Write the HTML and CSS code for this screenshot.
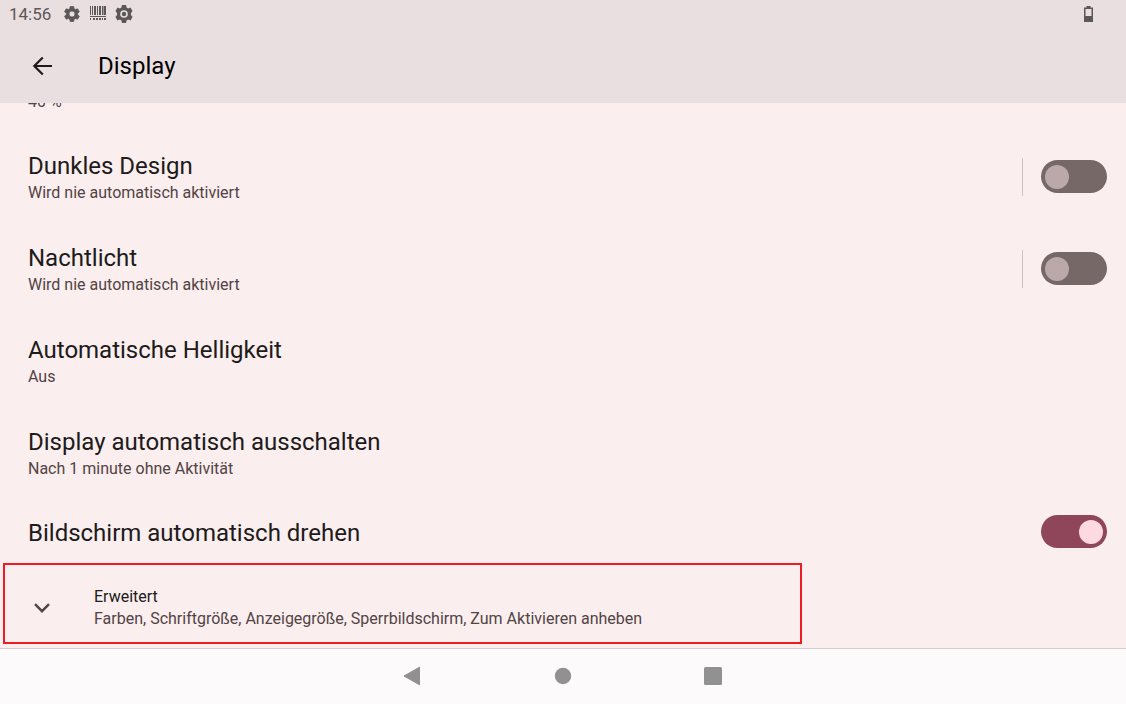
FILE: index.html
```html
<!DOCTYPE html>
<html lang="de">
<head>
<meta charset="utf-8">
<meta name="viewport" content="width=device-width, initial-scale=1">
<title>Display</title>
<link rel="stylesheet" href="styles.css">
</head>
<body>
<header class="top">
  <div class="status">
    <time class="clock">14:56</time>
    <svg class="gear-small" viewBox="0 0 24 24" width="18" height="18" aria-hidden="true"><path fill="currentColor" stroke="currentColor" fill-rule="evenodd" d="M19.4 13a7.500 7.500 0 0 0 0-2l2.100-1.600a.5.5 0 0 0 .1-.7l-2-3.400a.5.5 0 0 0-.6-.2l-2.500 1a7.300 7.300 0 0 0-1.700-1l-.4-2.600a.5.5 0 0 0-.5-.5h-4a.5.5 0 0 0-.5.5L9 5.100a7.700 7.700 0 0 0-1.700 1l-2.500-1a.5.5 0 0 0-.6.2l-2 3.400a.5.5 0 0 0 .1.700L4.500 11a8 8 0 0 0 0 2l-2.200 1.600a.5.5 0 0 0-.1.700l2 3.400c.1.200.4.300.6.200l2.500-1a7.300 7.300 0 0 0 1.700 1l.4 2.600c0 .3.200.5.500.5h4c.3 0 .5-.2.5-.5l.4-2.600a7.700 7.700 0 0 0 1.700-1l2.500 1c.2.100.5 0 .6-.2l2-3.400a.5.5 0 0 0-.1-.7zM12 16a4 4 0 1 1 0-8 4 4 0 0 1 0 8z"/></svg>
    <svg class="barcode" viewBox="0 0 16 15" width="16" height="15" aria-hidden="true"><path fill="currentColor" d="M0 0h1v9H0zM2 0h1v9H2zM4 0h2v9H4zM7 0h1v9H7zM9 0h2v9H9zM12 0h1v9h-1zM13.500 0H16v9h-2.500zM0 10h16v1H0zM0 12h1v2H0zM3 12h2v2H3zM6 12h2v2H6zM9 12h2v2H9zM12 12h1v2h-1zM14 12h2v2h-2z"/></svg>
    <svg class="gear-large" viewBox="0 0 18 18" width="18" height="18" aria-hidden="true"><path fill="currentColor" fill-rule="evenodd" d="M7 0h4l.6 2.500 1.500.9L15.500 2.600l2 3.500L16 8v2l1.500 1.900-2 3.500-2.400-.8-1.500.9L11 18H7l-.6-2.500-1.500-.9-2.400.8-2-3.500L2 10V8L.5 6.100l2-3.500 2.400.8 1.500-.9zM9 5.200a3.800 3.800 0 1 0 0 7.600 3.800 3.800 0 0 0 0-7.600z"/><circle cx="9" cy="9" r="2.200" fill="currentColor"/></svg>
    <svg class="battery" viewBox="0 0 9 16" width="9" height="16" aria-hidden="true"><path fill="currentColor" fill-rule="evenodd" d="M2.500 0h4v1.500H9V16H0V1.500h2.500zM1.500 3v7h6V3z"/></svg>
  </div>
  <div class="appbar">
    <button class="back" type="button" aria-label="Zurück"><svg viewBox="0 0 20 20" width="20" height="20" aria-hidden="true"><path fill="none" stroke="currentColor" stroke-width="2.200" d="M20 10H2.500M10.800 1.500L2.300 10l8.500 8.500"/></svg></button>
    <h1 class="title">Display</h1>
  </div>
</header>
<main class="settings">
  <div class="peek">40 %</div>
  <section class="row">
    <div class="copy"><h2 class="name" id="dark">Dunkles Design</h2><p class="summary">Wird nie automatisch aktiviert</p></div>
    <div class="control divided"><input class="switch" type="checkbox" role="switch" aria-labelledby="dark"></div>
  </section>
  <section class="row">
    <div class="copy"><h2 class="name" id="night">Nachtlicht</h2><p class="summary">Wird nie automatisch aktiviert</p></div>
    <div class="control divided"><input class="switch" type="checkbox" role="switch" aria-labelledby="night"></div>
  </section>
  <section class="row">
    <div class="copy"><h2 class="name">Automatische Helligkeit</h2><p class="summary">Aus</p></div>
  </section>
  <section class="row">
    <div class="copy"><h2 class="name">Display automatisch ausschalten</h2><p class="summary">Nach 1 minute ohne Aktivität</p></div>
  </section>
  <section class="row single">
    <div class="copy"><h2 class="name" id="rotate">Bildschirm automatisch drehen</h2></div>
    <div class="control"><input class="switch" type="checkbox" role="switch" aria-labelledby="rotate" checked></div>
  </section>
  <button class="advanced" type="button">
    <svg class="chevron" viewBox="0 0 16 10" width="16" height="10" aria-hidden="true"><path fill="none" stroke="currentColor" stroke-width="2.400" d="M1 1.200l7 7 7-7"/></svg>
    <span class="advanced-copy"><span class="advanced-name">Erweitert</span><span class="advanced-summary">Farben, Schriftgröße, Anzeigegröße, Sperrbildschirm, Zum Aktivieren anheben</span></span>
  </button>
</main>
<nav class="navbar" aria-label="System">
  <button class="nav-button" type="button" aria-label="Zurück"><svg viewBox="0 0 20 20" width="20" height="20" aria-hidden="true"><path fill="currentColor" stroke="currentColor" stroke-linejoin="round" d="M1 10L16.500 1.200v17.600z"/></svg></button>
  <button class="nav-button" type="button" aria-label="Startbildschirm"><svg viewBox="0 0 20 20" width="20" height="20" aria-hidden="true"><circle cx="10" cy="10" r="8.200" fill="currentColor"/></svg></button>
  <button class="nav-button" type="button" aria-label="Übersicht"><svg viewBox="0 0 20 20" width="20" height="20" aria-hidden="true"><rect x="1" y="1" width="18" height="18" rx="1.500" fill="currentColor"/></svg></button>
</nav>
</body>
</html>
```

FILE: styles.css
```css
* {
  box-sizing: border-box;
}

body {
  display: flex;
  flex-direction: column;
  min-height: 100vh;
  margin: 0;
  background: #faeeee;
  color: #201a1b;
  font-family: Roboto, sans-serif;
}

h1, h2, p {
  margin: 0;
  font-weight: 400;
}

button {
  padding: 0;
  border: 0;
  background: none;
  color: inherit;
  font: inherit;
  text-align: left;
}

svg {
  display: block;
  flex: none;
}

.top {
  background: #e9dfe0;
}

.status {
  display: flex;
  align-items: center;
  height: 29px;
  padding: 0 33px 2px 9px;
  color: #5c5758;
}

.clock {
  font-size: 17px;
  line-height: 20px;
}

.gear-small {
  margin-left: 12px;
}

.barcode {
  margin-left: 9px;
}

.gear-large {
  margin-left: 9px;
}

.battery {
  margin-left: auto;
}

.appbar {
  display: flex;
  align-items: center;
  gap: 46px;
  height: 74px;
  padding-left: 32px;
}

.title {
  color: #000;
  font-size: 24px;
  line-height: 32px;
}

.settings {
  display: flex;
  flex: 1;
  flex-direction: column;
  overflow: hidden;
  padding-bottom: 4px;
}

.peek {
  height: 40px;
  margin-top: -12px;
  color: #524345;
  font-size: 16px;
  line-height: 22px;
}

.peek, .row {
  padding-left: 28px;
}

.row {
  display: flex;
  flex: 1 0 auto;
  align-items: center;
  justify-content: space-between;
  padding-right: 19px;
}

.row.single {
  flex: none;
  height: 65px;
  padding-top: 2px;
}

.copy {
  padding-top: 3px;
}

.name {
  font-size: 24px;
  line-height: 30px;
}

.summary {
  color: #524345;
  font-size: 16px;
  line-height: 24px;
}

.control {
  display: flex;
  align-items: center;
  height: 38px;
}

.divided {
  padding-left: 18px;
  border-left: 1px solid #cfc4c5;
}

.switch {
  appearance: none;
  display: flex;
  align-items: center;
  width: 66px;
  height: 33px;
  margin: 0;
  padding: 0 4px;
  border-radius: 17px;
  background: #776868;
}

.switch::before {
  width: 24px;
  height: 24px;
  border-radius: 50%;
  background: #bba9aa;
  content: "";
}

.switch:checked {
  justify-content: flex-end;
  background: #8f465b;
}

.switch:checked::before {
  background: #ffd9e1;
}

.advanced {
  display: flex;
  align-items: center;
  gap: 44px;
  width: 71%;
  height: 81px;
  margin-left: 3px;
  padding: 8px 29px 0;
  border: 2px solid #ed1c24;
}

.chevron {
  color: #524345;
}

.advanced-copy {
  display: flex;
  flex-direction: column;
  font-size: 16px;
  line-height: 22px;
}

.advanced-summary {
  color: #524345;
}

.navbar {
  display: flex;
  justify-content: center;
  gap: 130px;
  height: 56px;
  padding-bottom: 2px;
  border-top: 1px solid #d8cdce;
  background: #fcfafb;
  color: #929192;
}

.nav-button {
  display: flex;
  align-items: center;
}
```
